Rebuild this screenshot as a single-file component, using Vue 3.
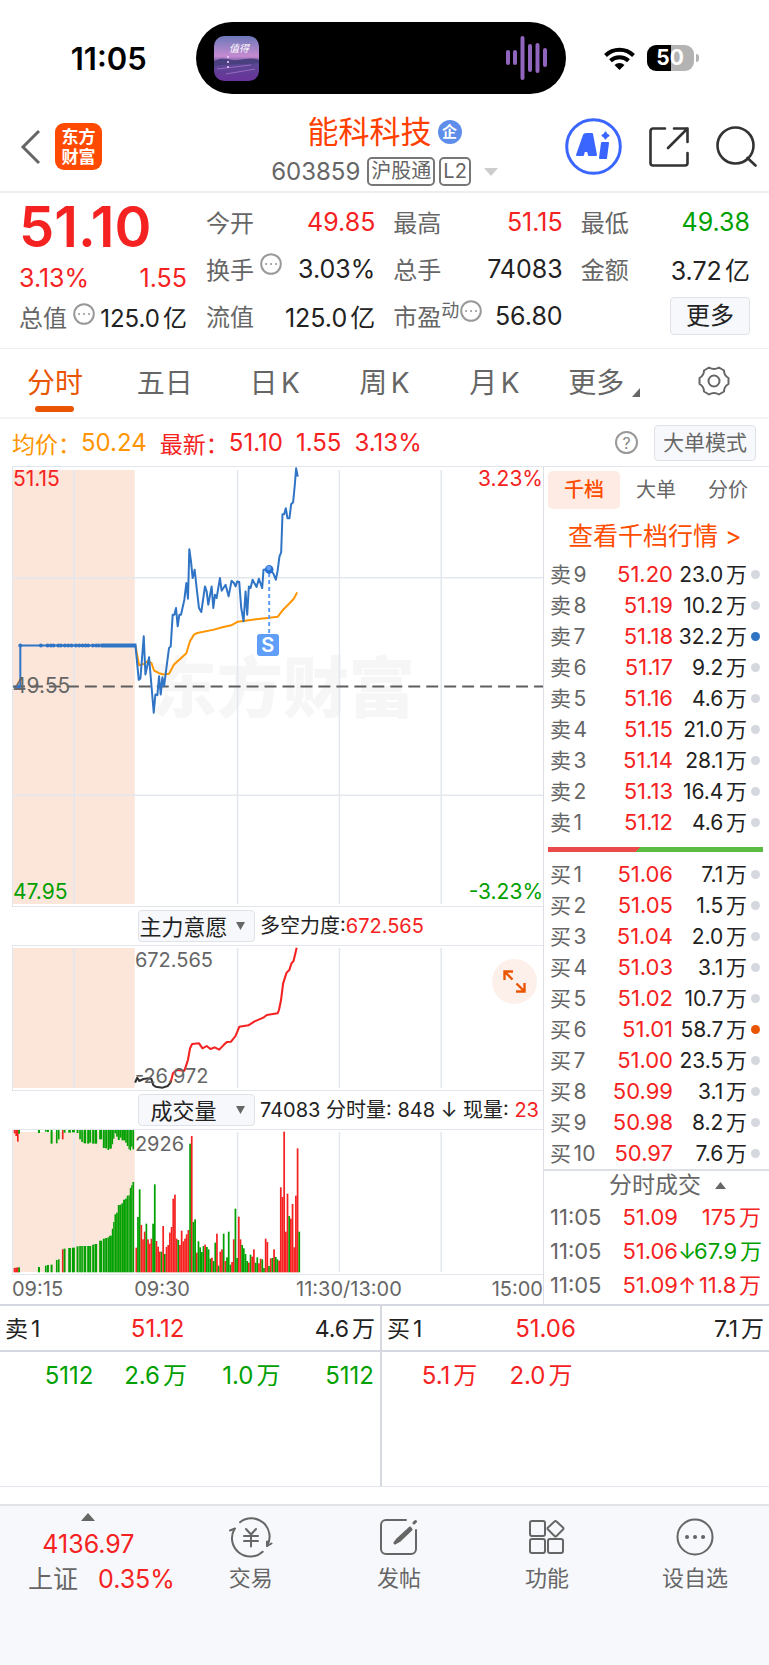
<script setup>
import { computed, ref } from 'vue'

const tabs = ['分时', '五日', '日K', '周K', '月K']
const activeTab = ref('分时')

const bookTabs = ['千档', '大单', '分价']
const activeBookTab = ref('千档')

const mainIndicator = ref('主力意愿')
const volumeIndicator = ref('成交量')

const stats = [
  { label: '今开', value: '49.85', tone: 'up' },
  { label: '最高', value: '51.15', tone: 'up' },
  { label: '最低', value: '49.38', tone: 'down' },
  { label: '换手', value: '3.03%', info: true },
  { label: '总手', value: '74083' },
  { label: '金额', value: '3.72亿' },
  { label: '流值', value: '125.0亿' },
  { label: '市盈', sup: '动', value: '56.80', info: true },
]

const asks = [
  ['卖9', '51.20', '23.0万'],
  ['卖8', '51.19', '10.2万'],
  ['卖7', '51.18', '32.2万', 'blue'],
  ['卖6', '51.17', '9.2万'],
  ['卖5', '51.16', '4.6万'],
  ['卖4', '51.15', '21.0万'],
  ['卖3', '51.14', '28.1万'],
  ['卖2', '51.13', '16.4万'],
  ['卖1', '51.12', '4.6万'],
]

const bids = [
  ['买1', '51.06', '7.1万'],
  ['买2', '51.05', '1.5万'],
  ['买3', '51.04', '2.0万'],
  ['买4', '51.03', '3.1万'],
  ['买5', '51.02', '10.7万'],
  ['买6', '51.01', '58.7万', 'orange'],
  ['买7', '51.00', '23.5万'],
  ['买8', '50.99', '3.1万'],
  ['买9', '50.98', '8.2万'],
  ['买10', '50.97', '7.6万'],
]

const ticks = [
  { time: '11:05', price: '51.09', arrow: '', volume: '175万', tone: 'up' },
  { time: '11:05', price: '51.06', arrow: '↓', volume: '67.9万', tone: 'down' },
  { time: '11:05', price: '51.09', arrow: '↑', volume: '11.8万', tone: 'up' },
]

const queues = [
  { side: '卖1', price: '51.12', volume: '4.6万', tone: 'down', orders: ['5112', '2.6万', '1.0万', '5112'] },
  { side: '买1', price: '51.06', volume: '7.1万', tone: 'up', orders: ['5.1万', '2.0万', '', ''] },
]

// 坐标单位为 1/3 像素
const pricePath =
  'M38 697H58V573H404L414 676 419 672 429 545 434 660 445 608 459 775 464 720 470 722 475 665 480 720 485 668 490 695 505 580 510 576 516 480 521 480 526 460 531 515 536 480 541 480 551 435 557 385 562 432 566 283 571 320 576 370 582 345 588 400 595 460 602 472 613 395 618 410 623 450 633 395 638 460 643 420 648 430 658 370 663 408 675 390 684 425 693 378 700 385 705 395 710 380 716 382 722 460 729 500 735 410 740 480 745 395 750 400 756 375 768 397 775 372 785 400 789 345 806 343 818 355 826 375 831 350 837 305 842 293 846 178 851 178 856 160 861 190 867 190 872 148 878 142 883 90 887 40 892 65'
const averagePath =
  'M404 573L415 632 430 628 440 620 452 625 460 648 475 656 488 660 505 658 520 630 540 612 557 596 568 560 580 540 590 535 640 525 665 518 692 512 712 501 750 496 800 490 832 486 848 465 865 448 880 432 890 413'
const auctionDots = [58, 120, 140, 150, 158, 172, 180, 192, 202, 212, 225, 235, 245, 254, 262, 276, 286, 294]

// 正数为红柱，负数为绿柱，数值为柱顶位置
const volumeTops = [
  455, -363, -280, 387, 430, 407, -383, 430, 443, 428, -383, -265, 435, 452, 467, -467, 390, -474, 453, 447,
  410, 393, 308, 296, 428, -432, 447, 404, 436, 428, 415, 402, -143, 120, -378, -370, 470, -436, -454, -468,
  -450, 446, -453, -460, -488, 485, -495, -440, 413, -509, 467, 460, -413, 495, -484, -407, -506, 498, 430,
  -338, -486, 362, 430, -447, -457, -474, -495, 500, -476, 482, 460, -500, -484, 502, 488, -490, -516, 428,
  438, -510, 487, -486, 460, -483, -490, 494, 274, 303, 107, 407, 293, -360, 368, 324, 454, 299, 157, -407,
]
const volumeBars = computed(() =>
  volumeTops.map((top, i) => ({
    x: 404 + i * 5.05,
    y: Math.abs(top),
    height: 529 - Math.abs(top),
    up: top > 0,
  })),
)

// [x, 宽, 顶部柱下沿, 底部柱上沿, 是否红色]
const auctionBars = [
  [38, 6, 112, 516, 1], [43, 6, 120, 515, 1], [48, 5, 137, 514, 1], [52, 5, 113, 514],
  [111, 6, 111, 513], [132, 5, 107, 509], [138, 6, 108, 507], [149, 6, 143, 506],
  [165, 5, 142, 492], [171, 5, 130, 490], [183, 5, 130, 460, 1], [188, 6, 110, 458],
  [202, 8, 110, 456], [213, 9, 109, 455], [227, 6, 111, 451], [235, 5, 130, 450],
  [241, 5, 138, 450], [248, 8, 142, 450], [259, 6, 143, 450], [265, 6, 140, 450],
  [274, 6, 143, 446], [281, 8, 143, 444], [295, 9, 130, 434], [306, 6, 156, 428],
  [313, 6, 157, 426], [320, 5, 162, 424], [325, 8, 158, 419],
  [333, 4, 145, 398], [337, 4, 128, 378], [341, 5, 112, 355], [346, 5, 122, 350], [351, 6, 132, 327],
  [357, 5, 125, 326], [362, 5, 133, 322], [367, 6, 133, 311], [373, 5, 140, 308], [378, 5, 150, 299],
  [383, 4, 160, 298], [387, 4, 163, 276], [391, 4, 152, 268], [395, 5, 160, 258],
]
const gridX = [61, 225, 327, 429]
</script>

<template>
  <main class="page">
    <div class="status-bar">
      <span class="clock">11:05</span>
      <div class="island">
        <svg class="album" viewBox="0 0 45 45" aria-hidden="true">
          <defs>
            <linearGradient id="sky" x1="0" y1="0" x2="0" y2="1">
              <stop offset="0" stop-color="#6c78b8" />
              <stop offset="0.45" stop-color="#c58bd2" />
              <stop offset="0.6" stop-color="#5a4a92" />
              <stop offset="1" stop-color="#6a329c" />
            </linearGradient>
          </defs>
          <rect width="45" height="45" rx="10" fill="url(#sky)" />
          <path d="M0 25c10-5 16 0 24-1s14-3 21 0v3c-12 2-30 0-45 3z" fill="#4a4080" />
          <path d="M3 33l34-4M12 38l29-5" stroke="#9a69c2" stroke-width="1" />
          <path d="M14 20v12" stroke="#f6d3ff" stroke-width="1.5" stroke-dasharray="2 3" />
          <text x="15" y="16" font-size="10" font-style="italic" fill="#fff">值得</text>
        </svg>
        <svg class="wave" viewBox="0 0 42 44" aria-hidden="true">
          <g stroke="#9065be" stroke-width="4" stroke-linecap="round">
            <path d="M2 16v11M9 16v11M16.500 2v40M24 10v24M31.500 9v26M39 14v15" />
          </g>
        </svg>
      </div>
      <div class="signals">
        <svg class="wifi" viewBox="0 0 31 23" aria-hidden="true">
          <g fill="none" stroke="#000" stroke-width="4">
            <path d="M1.500 8.500a20 20 0 0 1 28 0" />
            <path d="M6.500 13.800a13 13 0 0 1 18 0" />
          </g>
          <path d="M10.500 18a7.500 7.500 0 0 1 10 0l-5 5z" />
        </svg>
        <span class="battery">50</span>
        <span class="battery-tip"></span>
      </div>
    </div>

    <header class="header">
      <div class="header-left">
        <button type="button" class="plain" aria-label="返回">
          <svg width="21" height="36" viewBox="0 0 21 36" fill="none" stroke="#666" stroke-width="3">
            <path d="M19 2L3 18l16 16" />
          </svg>
        </button>
        <span class="logo">东方<br />财富</span>
      </div>
      <div class="header-title">
        <h1>能科科技<span class="corp">企</span></h1>
        <p>
          603859<span class="tag">沪股通</span><span class="tag tag--narrow">L2</span>
          <svg width="14" height="8" viewBox="0 0 14 8" aria-hidden="true"><path d="M0 0h14L7 8z" fill="#ccc" /></svg>
        </p>
      </div>
      <div class="header-actions">
        <button type="button" class="plain" aria-label="AI">
          <svg width="57" height="57" viewBox="0 0 57 57">
            <circle cx="28.500" cy="28.500" r="26.800" fill="none" stroke="#3a66ff" stroke-width="3" />
            <g fill="#3a66ff" stroke="#3a66ff" stroke-width="2" stroke-linejoin="round" fill-rule="evenodd">
              <path d="M12 37l7-20q1-1 3-1h5l4 21h-7l-1-4h-4l-1 4zM20.500 28.500h2.500l-.5-4z" />
              <path d="M37 25h6l-2 15h-6z" />
              <path d="M40.500 14.500q.8 2.500 3 3q-2.200.8-3 3q-.8-2.200-3-3q2.200-.5 3-3z" />
            </g>
          </svg>
        </button>
        <button type="button" class="plain" aria-label="分享">
          <svg width="40" height="40" viewBox="0 0 40 40" fill="none" stroke="#333" stroke-width="2.600" stroke-linecap="round" stroke-linejoin="round">
            <path d="M16 1.500H4a2.500 2.500 0 0 0-2.500 2.500v32a2.500 2.500 0 0 0 2.500 2.500h32a2.500 2.500 0 0 0 2.500-2.500V26" />
            <path d="M25 1.500h13.500V15M38.500 1.500L19 21" />
          </svg>
        </button>
        <button type="button" class="plain" aria-label="搜索">
          <svg width="41" height="41" viewBox="0 0 41 41" fill="none" stroke="#333" stroke-width="2.600" stroke-linecap="round">
            <circle cx="19.500" cy="19.500" r="18" />
            <path d="M31.500 32l8 7.500" />
          </svg>
        </button>
      </div>
    </header>

    <section class="quote">
      <div class="quote-main">
        <strong class="last up">51.10</strong>
        <div class="change up"><span>3.13%</span><span>1.55</span></div>
        <div class="total">
          <span class="label">总值</span>
          <svg class="info" viewBox="0 0 22 22" aria-hidden="true">
            <circle cx="11" cy="11" r="9.800" />
            <path d="M6 11h.1M11 11h.1M16 11h.1" />
          </svg>
          <span class="value">125.0亿</span>
        </div>
      </div>
      <div class="quote-stats">
        <div v-for="item in stats" :key="item.label" class="stat">
          <span class="label">{{ item.label }}<sup v-if="item.sup">{{ item.sup }}</sup></span>
          <svg v-if="item.info" class="info" :class="{ 'info--tight': item.sup }" viewBox="0 0 22 22" aria-hidden="true">
            <circle cx="11" cy="11" r="9.800" />
            <path d="M6 11h.1M11 11h.1M16 11h.1" />
          </svg>
          <span class="value" :class="item.tone">{{ item.value }}</span>
        </div>
        <div class="stat"><button type="button" class="box-button more">更多</button></div>
      </div>
    </section>

    <nav class="tabs">
      <button
        v-for="tab in tabs"
        :key="tab"
        type="button"
        class="tab"
        :class="{ 'tab--active': tab === activeTab }"
        @click="activeTab = tab"
      >
        {{ tab }}
      </button>
      <button type="button" class="tab tab--more">
        更多
        <svg width="8" height="9" viewBox="0 0 8 9" aria-hidden="true"><path d="M8 0v9H0z" fill="#666" /></svg>
      </button>
      <button type="button" class="tab" aria-label="设置">
        <svg class="gear" width="32" height="32" viewBox="0 0 32 32" fill="none" stroke="#666" stroke-width="2" stroke-linejoin="round">
          <path d="M11 2.500q5 3 10 0l5 3q0 5 4.500 7.500v6q-4.500 2.500-4.500 7.500l-5 3q-5-3-10 0l-5-3q0-5-4.500-7.500v-6q4.500-2.500 4.500-7.500z" />
          <circle cx="16" cy="16" r="5.500" />
        </svg>
      </button>
    </nav>

    <div class="summary">
      <span class="avg">均价：</span><span class="avg num">50.24</span>
      <span class="up">最新：</span><span class="up num">51.10</span>
      <span class="up num">1.55</span>
      <span class="up num">3.13%</span>
      <span class="help">?</span>
      <button type="button" class="box-button mode">大单模式</button>
    </div>

    <section class="market">
      <div class="charts">
        <div class="plot plot--price">
          <span class="watermark">东方财富</span>
          <svg class="canvas" viewBox="0 0 531 440" preserveAspectRatio="none">
            <rect y="3" width="122" height="435" fill="#fce6da" />
            <g class="grid">
              <path v-for="x in gridX" :key="x" :d="`M${x} 3V438`" />
              <path d="M0 111H531M0 329H531" />
            </g>
            <path d="M0 220H531" stroke="#5e5e5e" stroke-width="2" stroke-dasharray="12 6" />
            <g transform="translate(-12 -12) scale(0.33333)" fill="none" stroke-linejoin="round">
              <path :d="averagePath" stroke="#ff9500" stroke-width="6" />
              <path :d="pricePath" stroke="#2f74c5" stroke-width="6" />
              <path d="M300 573H407" stroke="#2f74c5" stroke-width="12" />
              <circle v-for="x in auctionDots" :key="x" :cx="x" cy="573" r="6" fill="#2f74c5" />
              <path d="M36 706l22-18v18z" fill="#2f74c5" />
              <path d="M806 355V540" stroke="#5a9cfb" stroke-width="6" stroke-dasharray="12 9" />
              <circle cx="806" cy="344" r="13" fill="#2a6fd0" />
              <circle cx="805" cy="340" r="7" fill="#5fa0ff" />
            </g>
          </svg>
          <span class="signal">S</span>
          <span class="axis axis--tl up">51.15</span>
          <span class="axis axis--tr up">3.23%</span>
          <span class="axis axis--mid">49.55</span>
          <span class="axis axis--bl down">47.95</span>
          <span class="axis axis--br down">-3.23%</span>
        </div>

        <div class="indicator">
          <label class="picker">
            <select v-model="mainIndicator" aria-label="主图指标">
              <option>主力意愿</option>
            </select>
            <svg width="9" height="8" viewBox="0 0 9 8" aria-hidden="true"><path d="M0 0h9L4.500 8z" fill="#666" /></svg>
          </label>
          <span>多空力度:<b class="up">672.565</b></span>
        </div>

        <div class="plot plot--will">
          <svg class="canvas" viewBox="0 0 531 144" preserveAspectRatio="none">
            <rect y="2" width="122" height="140" fill="#fce6da" />
            <g class="grid"><path v-for="x in gridX" :key="x" :d="`M${x} 2V142`" /></g>
            <g transform="translate(-12 -46) scale(0.34807 0.33333)" fill="none" stroke-width="6" stroke-linejoin="round">
              <path d="M386 548L392 533 398 543 410 537 425 535 433 537 438 555 445 560 465 563 480 558 488 548" stroke="#333" />
              <path d="M488 548L495 520 505 510 528 512 538 480 544 445 550 432 570 430 580 445 592 438 603 447 615 442 628 449 640 436 650 426 662 425 675 408 686 380 712 376 730 364 755 353 765 345 796 340 800 330 806 300 812 250 822 218 830 210 836 190 842 183 851 143" stroke="#f52222" />
            </g>
          </svg>
          <span class="axis axis--session">672.565</span>
          <span class="axis axis--session axis--low">-26.972</span>
          <button type="button" class="expand" aria-label="展开">
            <svg width="23" height="23" viewBox="0 0 23 23" fill="none" stroke="#ea5504" stroke-width="2.400">
              <path d="M1.500 10V1.500H10M1.500 1.500l8 8M21.500 13v8.500H13M21.500 21.500l-8-8" />
            </svg>
          </button>
        </div>

        <div class="indicator">
          <label class="picker">
            <select v-model="volumeIndicator" aria-label="副图指标">
              <option>成交量</option>
            </select>
            <svg width="9" height="8" viewBox="0 0 9 8" aria-hidden="true"><path d="M0 0h9L4.500 8z" fill="#666" /></svg>
          </label>
          <span>74083 分时量: 848 ↓ 现量: <b class="up">23</b></span>
        </div>

        <div class="plot plot--volume">
          <svg class="canvas" viewBox="0 0 531 144" preserveAspectRatio="none">
            <rect y="2" width="122" height="140" fill="#fce6da" />
            <g class="grid"><path v-for="x in gridX" :key="x" :d="`M${x} 2V142`" /></g>
            <g transform="translate(-12 -34) scale(0.33333)">
              <template v-for="bar in auctionBars" :key="bar[0]">
                <rect :x="bar[0]" y="102" :width="bar[1]" :height="bar[2] - 102" :fill="bar[4] ? '#f52222' : '#00a000'" />
                <rect :x="bar[0]" :y="bar[3]" :width="bar[1]" :height="529 - bar[3]" :fill="bar[4] ? '#f52222' : '#00a000'" />
              </template>
              <rect
                v-for="bar in volumeBars"
                :key="bar.x"
                :x="bar.x"
                :y="bar.y"
                width="5.200"
                :height="bar.height"
                :fill="bar.up ? '#f52222' : '#00a000'"
              />
            </g>
          </svg>
          <span class="axis axis--session">2926</span>
        </div>

        <div class="times">
          <span>09:15</span><span>09:30</span><span>11:30/13:00</span><span>15:00</span>
        </div>
      </div>

      <aside class="book">
        <div class="book-tabs">
          <button
            v-for="tab in bookTabs"
            :key="tab"
            type="button"
            :class="{ active: tab === activeBookTab }"
            @click="activeBookTab = tab"
          >
            {{ tab }}
          </button>
        </div>
        <a class="depth-link" href="#">查看千档行情 &gt;</a>
        <table class="levels">
          <tbody>
            <tr v-for="row in asks" :key="row[0]">
              <td>{{ row[0] }}</td>
              <td class="up">{{ row[1] }}</td>
              <td>{{ row[2] }}</td>
              <td><i class="dot" :class="row[3]"></i></td>
            </tr>
          </tbody>
        </table>
        <div class="ratio"></div>
        <table class="levels">
          <tbody>
            <tr v-for="row in bids" :key="row[0]">
              <td>{{ row[0] }}</td>
              <td class="up">{{ row[1] }}</td>
              <td>{{ row[2] }}</td>
              <td><i class="dot" :class="row[3]"></i></td>
            </tr>
          </tbody>
        </table>
        <button type="button" class="ticks-title">
          分时成交
          <svg width="11" height="7" viewBox="0 0 11 7" aria-hidden="true"><path d="M0 7h11L5.500 0z" fill="#666" /></svg>
        </button>
        <div v-for="(tick, i) in ticks" :key="i" class="tick">
          <span>{{ tick.time }}</span>
          <span class="tick-price up">{{ tick.price }}</span>
          <span class="tick-arrow" :class="tick.tone">{{ tick.arrow }}</span>
          <span class="tick-volume" :class="tick.tone">{{ tick.volume }}</span>
        </div>
      </aside>
    </section>

    <section class="queues">
      <div v-for="queue in queues" :key="queue.side" class="queue">
        <div class="queue-head">
          <span>{{ queue.side }}</span><span class="up">{{ queue.price }}</span><span>{{ queue.volume }}</span>
        </div>
        <div class="queue-orders" :class="queue.tone">
          <span v-for="(order, i) in queue.orders" :key="i">{{ order }}</span>
        </div>
      </div>
    </section>

    <footer class="bottom-nav">
      <button type="button" class="index">
        <svg width="14" height="8" viewBox="0 0 14 8" aria-hidden="true"><path d="M0 8h14L7 0z" fill="#666" /></svg>
        <span class="up">4136.97</span>
        <span class="index-row">上证<b class="up">0.35%</b></span>
      </button>
      <button type="button" class="nav-item">
        <svg viewBox="0 0 42 38">
          <path d="M10 4.200A18.300 18.300 0 0 1 37 28M32.700 33.700A18.300 18.300 0 0 1 4.500 11" />
          <path d="M0 12.500L5 10.500M41.500 25.500L37 28v-4.500" />
          <path d="M16 11l5 5.500 5-5.500M14 18h14M14 23h14M21 17v11.500" />
        </svg>
        交易
      </button>
      <button type="button" class="nav-item">
        <svg viewBox="0 0 42 38">
          <path d="M28 2H8a5 5 0 0 0-5 5v24a5 5 0 0 0 5 5h25a5 5 0 0 0 5-5V12" />
          <path d="M32 10L20 21l-3 4 4.500-2.500L33 11.500zM36 5l1.500-1.500" stroke-width="3" />
        </svg>
        发帖
      </button>
      <button type="button" class="nav-item">
        <svg viewBox="0 0 42 38">
          <rect x="4" y="3" width="15" height="15" rx="2" />
          <rect x="4" y="21" width="15" height="14" rx="2" />
          <rect x="22" y="21" width="15" height="14" rx="2" />
          <path d="M28.500 3.500q1-1 2 0l6.500 6q1 1 0 2l-6.500 6.500q-1 1-2 0l-6.500-6.500q-1-1 0-2z" />
        </svg>
        功能
      </button>
      <button type="button" class="nav-item">
        <svg viewBox="0 0 42 38">
          <circle cx="21" cy="19" r="17.500" />
          <path d="M13 19h.1M21 19h.1M29 19h.1" stroke-width="4" />
        </svg>
        设自选
      </button>
    </footer>
  </main>
</template>

<style>
body {
  margin: 0;
  background: #ffffff;
}
</style>

<style scoped>
.page {
  display: flex;
  flex-direction: column;
  min-height: 100vh;
  font-family: Inter, 'Noto Sans CJK SC', sans-serif;
  font-size: 22px;
  color: #222222;
  text-autospace: normal;
}

*,
*::before {
  box-sizing: border-box;
}

button,
select {
  margin: 0;
  padding: 0;
  border: 0;
  background: none;
  color: inherit;
  font: inherit;
  text-autospace: normal;
  cursor: pointer;
}

svg {
  display: block;
  flex-shrink: 0;
}

b {
  font-weight: 400;
}

.up {
  color: #f52222;
}

.down {
  color: #00a000;
}

.status-bar {
  display: grid;
  grid-template-columns: 1fr 370px 1fr;
  align-items: center;
  height: 102px;
  padding: 14px 8px 0 0;
}

.clock {
  padding-left: 22px;
  font-size: 31px;
  font-weight: 600;
  text-align: center;
  color: #000000;
}

.island {
  display: flex;
  align-items: center;
  justify-content: space-between;
  height: 72px;
  padding: 0 18px;
  border-radius: 36px;
  background: #000000;
}

.album {
  width: 45px;
  height: 45px;
}

.wave {
  width: 42px;
  height: 44px;
}

.signals {
  display: flex;
  align-items: center;
  padding-left: 38px;
}

.wifi {
  width: 31px;
  height: 23px;
}

.battery {
  width: 47px;
  margin-left: 12px;
  border-radius: 9px;
  background: linear-gradient(90deg, #000000 50%, #b3b3b3 50%);
  color: #ffffff;
  font-size: 21px;
  font-weight: 700;
  line-height: 26px;
  text-align: center;
}

.battery-tip {
  width: 3px;
  height: 8px;
  margin-left: 2px;
  border-radius: 0 4px 4px 0;
  background: #b3b3b3;
}

.header {
  display: grid;
  grid-template-columns: 1fr auto 1fr;
  align-items: center;
  height: 91px;
  padding: 0 12px;
  border-bottom: 2px solid #eeeeee;
}

.header-left,
.header-actions {
  display: flex;
  align-items: center;
}

.header-left {
  gap: 14px;
  padding-left: 8px;
}

.header-actions {
  justify-content: flex-end;
  gap: 27px;
}

.logo {
  width: 47px;
  height: 47px;
  padding-top: 4px;
  border-radius: 9px;
  background: #ff4a00;
  color: #ffffff;
  font-size: 17px;
  font-weight: 700;
  line-height: 20px;
  text-align: center;
}

.header-title {
  padding-top: 8px;
  color: #666666;
}

.header-title h1 {
  display: flex;
  align-items: center;
  justify-content: center;
  gap: 6px;
  margin: 0;
  color: #ff4000;
  font-size: 31px;
  font-weight: 400;
  line-height: 42px;
}

.corp {
  width: 24px;
  height: 24px;
  border-radius: 50%;
  background: #5f8eea;
  color: #ffffff;
  font-size: 15px;
  font-weight: 700;
  line-height: 23px;
  text-align: center;
}

.header-title p {
  display: flex;
  align-items: center;
  margin: 0;
  font-size: 24px;
  line-height: 38px;
}

.tag {
  margin-left: 7px;
  padding: 0 2px;
  border: 2px solid #777777;
  border-radius: 5px;
  font-size: 20px;
  line-height: 25px;
}

.tag--narrow {
  margin: 0 13px 0 4px;
}

.quote {
  display: grid;
  grid-template-columns: 168px minmax(0, 1fr);
  gap: 19px;
  padding: 5px 19px 9px;
  border-bottom: 1px solid #eeeeee;
  font-size: 24px;
}

.quote-main {
  display: flex;
  flex-direction: column;
  padding-top: 3px;
}

.last {
  font-size: 56px;
  font-weight: 600;
  line-height: 52px;
}

.change {
  display: flex;
  justify-content: space-between;
  font-size: 25px;
  line-height: 50px;
}

.total,
.stat {
  display: flex;
  align-items: center;
}

.total {
  line-height: 28px;
}

.quote-stats {
  display: grid;
  grid-template-columns: repeat(3, minmax(0, 1fr));
  grid-auto-rows: 47px;
  column-gap: 18px;
}

.label {
  color: #666666;
  white-space: nowrap;
}

.label sup {
  font-size: 18px;
  line-height: 18px;
}

.value {
  margin-left: auto;
  white-space: nowrap;
}

.stat .value {
  font-size: 25px;
}

.info {
  width: 22px;
  height: 22px;
  margin: 0 0 9px 6px;
  fill: none;
  stroke: #999999;
  stroke-width: 2;
  stroke-linecap: round;
}

.info--tight {
  margin-left: 1px;
}

.box-button {
  border: 1px solid #dfe2e8;
  border-radius: 4px;
  background: #f7f8fb;
}

.more {
  width: 80px;
  height: 38px;
  margin-left: auto;
  line-height: 34px;
}

.tabs {
  display: grid;
  grid-template-columns: repeat(7, 1fr);
  height: 70px;
  border-bottom: 2px solid #f4f4f4;
}

.tab {
  position: relative;
  display: flex;
  align-items: center;
  justify-content: center;
  padding-bottom: 4px;
  color: #666666;
  font-size: 28px;
}

.tab--active {
  color: #ea5504;
}

.tab--active::before {
  content: '';
  position: absolute;
  bottom: 5px;
  width: 39px;
  height: 6px;
  border-radius: 3px;
  background: #ea5504;
}

.tab--more {
  gap: 8px;
}

.tab--more svg {
  margin-top: 22px;
}

.summary {
  display: flex;
  align-items: center;
  height: 47px;
  padding: 0 13px 0 12px;
  font-size: 23px;
}

.avg {
  color: #ff9500;
}

.num {
  margin-right: 13px;
  font-size: 24px;
}

.help {
  width: 23px;
  height: 23px;
  margin: 0 16px 0 auto;
  border: 2px solid #999999;
  border-radius: 50%;
  color: #888888;
  font-size: 16px;
  line-height: 20px;
  text-align: center;
}

.mode {
  width: 102px;
  height: 36px;
  color: #666666;
  font-size: 21px;
  line-height: 32px;
}

.market {
  display: grid;
  grid-template-columns: minmax(0, 1fr) 226px;
  border-bottom: 2px solid #d5d8e0;
}

.charts {
  padding-left: 12px;
}

.plot {
  position: relative;
  border-top: 1px solid #e2e5ec;
  border-bottom: 1px solid #e2e5ec;
  border-left: 1px solid #e2e5ec;
}

.plot--price {
  height: 441px;
}

.plot--will,
.plot--volume {
  height: 146px;
}

.canvas {
  position: relative;
  width: 100%;
  height: 100%;
}

.grid {
  stroke: #e3e7ee;
  stroke-width: 1.5;
}

.watermark {
  position: absolute;
  top: 188px;
  left: 26%;
  color: #f6f6f6;
  font-size: 66px;
  font-weight: 900;
  line-height: 66px;
}

.signal {
  position: absolute;
  top: 167px;
  left: 46%;
  width: 22px;
  border-radius: 3px;
  background: #5f9ffa;
  color: #ffffff;
  font-size: 20px;
  font-weight: 600;
  line-height: 22px;
  text-align: center;
}

.axis {
  position: absolute;
  color: #666666;
  font-size: 20px;
  line-height: 24px;
}

.axis.up {
  color: #f52222;
}

.axis.down {
  color: #00a000;
}

.axis--tl,
.axis--bl,
.axis--mid {
  left: 0;
  font-size: 21px;
}

.axis--tr,
.axis--br {
  right: 0;
  font-size: 21px;
}

.axis--tl,
.axis--tr {
  top: 0;
}

.axis--bl,
.axis--br {
  bottom: 2px;
}

.axis--mid {
  top: 207px;
}

.axis--session {
  top: 2px;
  left: 23%;
}

.axis--low {
  top: auto;
  bottom: 2px;
}

.expand {
  position: absolute;
  top: 13px;
  right: 6px;
  display: flex;
  align-items: center;
  justify-content: center;
  width: 45px;
  height: 45px;
  border-radius: 50%;
  background: #fdf0ea;
}

.indicator {
  display: flex;
  align-items: center;
  gap: 5px;
  height: 38px;
  padding-left: 126px;
  font-size: 20px;
  line-height: 32px;
  white-space: nowrap;
}

.picker {
  position: relative;
  width: 117px;
}

.picker select {
  display: block;
  width: 100%;
  height: 32px;
  padding-right: 26px;
  border: 1px solid #dfe2e8;
  border-radius: 4px;
  background: #f7f8fb;
  appearance: none;
  color: #222222;
  font-size: 22px;
  text-align: center;
  text-align-last: center;
}

.picker svg {
  position: absolute;
  top: 12px;
  right: 10px;
  pointer-events: none;
}

.times {
  display: grid;
  grid-template-columns: 46fr 61fr 52fr 41fr;
  color: #666666;
  font-size: 20px;
  line-height: 29px;
}

.times span:last-child {
  text-align: right;
}

.book {
  display: flex;
  flex-direction: column;
  border-top: 1px solid #e2e5ec;
  border-left: 1px solid #dcdfe6;
}

.book-tabs {
  display: grid;
  grid-template-columns: repeat(3, 1fr);
  padding: 4px 5px 0 4px;
}

.book-tabs button {
  border-radius: 5px;
  color: #666666;
  font-size: 20px;
  line-height: 38px;
}

.book-tabs .active {
  background: #feece4;
  color: #ff4d00;
  font-weight: 500;
}

.depth-link {
  padding: 4px 0 0 24px;
  color: #ff4d00;
  font-size: 25px;
  line-height: 46px;
  text-decoration: none;
  white-space: nowrap;
}

.levels {
  width: 100%;
  border-spacing: 0;
  table-layout: fixed;
  line-height: 31px;
}

.levels td {
  height: 31px;
  padding: 0;
  font-size: 21px;
  text-align: right;
  white-space: nowrap;
}

.levels td:first-child {
  width: 58px;
  padding-left: 6px;
  color: #666666;
  text-align: left;
}

.levels td:nth-child(2) {
  width: 71px;
  font-size: 22px;
}

.levels td:last-child {
  width: 22px;
  padding-right: 9px;
}

.dot {
  display: block;
  width: 9px;
  height: 9px;
  margin-left: auto;
  border-radius: 50%;
  background: #d5d8de;
}

.dot.blue {
  background: #2f74c5;
}

.dot.orange {
  background: #ea5504;
}

.ratio {
  height: 5px;
  margin: 9px 6px 7px 4px;
  background: linear-gradient(135deg, #ea4a4a 42%, #5cbb42 42%);
}

.ticks-title {
  display: flex;
  align-items: center;
  justify-content: center;
  gap: 14px;
  padding-left: 22px;
  border-top: 2px solid #dcdfe6;
  color: #666666;
  font-size: 23px;
  line-height: 29px;
}

.tick {
  display: grid;
  grid-template-columns: 68px 60px 16px minmax(0, 1fr);
  padding: 0 8px 0 6px;
  color: #666666;
  font-size: 22px;
  line-height: 34px;
  white-space: nowrap;
}

.tick-price,
.tick-volume {
  text-align: right;
}

.queues {
  display: grid;
  grid-template-columns: 382fr 387fr;
  height: 181px;
  border-bottom: 1px solid #e2e5ec;
}

.queue:first-child {
  border-right: 2px solid #d5d8e0;
}

.queue-head {
  display: grid;
  grid-template-columns: 34% auto 1fr;
  padding: 2px 5px 0;
  border-bottom: 2px solid #d5d8e0;
  font-size: 23px;
  line-height: 42px;
}

.queue-head .up {
  font-size: 24px;
}

.queue-head span:last-child {
  text-align: right;
}

.queue-orders {
  display: grid;
  grid-template-columns: repeat(4, 1fr);
  padding-right: 6px;
  font-size: 24px;
  line-height: 48px;
  text-align: right;
}

.bottom-nav {
  display: grid;
  flex: 1;
  grid-template-columns: 23% repeat(4, minmax(0, 1fr));
  align-items: start;
  margin-top: 17px;
  padding-top: 7px;
  border-top: 2px solid #e2e4e8;
  background: #f7f8fb;
  color: #666666;
}

.index,
.nav-item {
  display: flex;
  flex-direction: column;
  align-items: center;
}

.index {
  font-size: 25px;
  line-height: 35px;
}

.index svg {
  margin-bottom: 6px;
}

.index-row {
  display: flex;
  gap: 20px;
  padding-left: 26px;
}

.nav-item {
  font-size: 22px;
  line-height: 36px;
}

.nav-item svg {
  width: 42px;
  height: 38px;
  margin: 5px 0 4px;
  overflow: visible;
  fill: none;
  stroke: #666666;
  stroke-width: 2;
  stroke-linecap: round;
  stroke-linejoin: round;
}
</style>
